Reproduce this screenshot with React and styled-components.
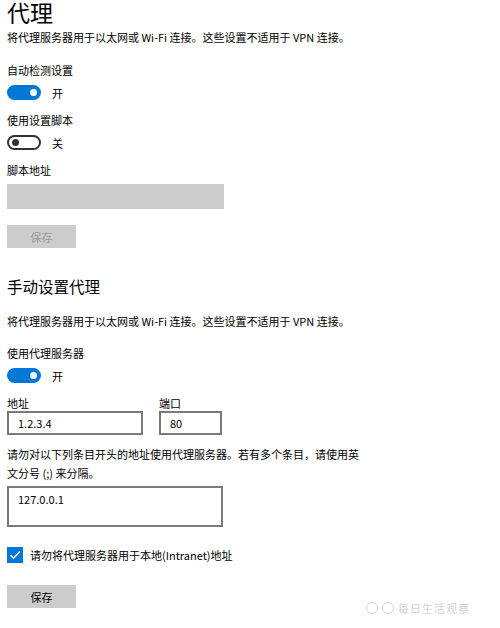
import styled, { createGlobalStyle } from "styled-components";

const Global = createGlobalStyle`
	html, body {
		margin: 0;
		padding: 0;
		background: #ffffff;
	}
	body {
		font-family: "Noto Sans CJK SC", "Noto Sans", sans-serif;
		color: #000000;
	}
`;

const Page = styled.div`
	position: relative;
	width: 500px;
	height: 628px;
	overflow: hidden;
	padding-left: 7px;
	box-sizing: border-box;
	display: flex;
	flex-direction: column;
	align-items: flex-start;
`;

const Title = styled.h1`
	margin: 0;
	font-size: 23px;
	font-weight: 400;
	line-height: 24px;
`;

const Heading = styled.h2`
	margin: ${(p) => p.$top}px 0 0;
	font-size: 15.5px;
	font-weight: 400;
	line-height: 22px;
`;

const Text = styled.div`
	margin-top: ${(p) => p.$top}px;
	font-size: 11px;
	line-height: ${(p) => p.$lh || 18}px;
	white-space: nowrap;
`;

const ToggleRow = styled.div`
	margin-top: ${(p) => p.$top}px;
	display: flex;
	align-items: center;
	gap: 11px;
	height: 15px;
	font-size: 11px;
`;

const Track = styled.div`
	width: 34px;
	height: 15px;
	box-sizing: border-box;
	border-radius: 8px;
	border: 2px solid ${(p) => (p.$on ? "#0078d7" : "#333333")};
	background: ${(p) => (p.$on ? "#0078d7" : "#ffffff")};
	display: flex;
	align-items: center;
	justify-content: ${(p) => (p.$on ? "flex-end" : "flex-start")};
	padding: 0 2.5px;
`;

const Knob = styled.div`
	width: 7px;
	height: 7px;
	border-radius: 50%;
	background: ${(p) => (p.$on ? "#ffffff" : "#333333")};
`;

const GrayField = styled.div`
	margin-top: 5px;
	width: 217px;
	height: 25px;
	background: #cccccc;
`;

const Button = styled.div`
	margin-top: ${(p) => p.$top}px;
	width: 69px;
	height: 23px;
	background: #cccccc;
	display: flex;
	align-items: center;
	justify-content: center;
	font-size: 11px;
	color: ${(p) => (p.$disabled ? "#9a9a9a" : "#000000")};
`;

const FieldRow = styled.div`
	margin-top: 13px;
	display: flex;
	gap: 16px;
`;

const Field = styled.div`
	display: flex;
	flex-direction: column;
`;

const FieldLabel = styled.div`
	font-size: 11px;
	line-height: 14px;
	margin-bottom: 1px;
`;

const Input = styled.div`
	width: ${(p) => p.$w}px;
	height: ${(p) => p.$h || 24}px;
	margin-top: ${(p) => p.$top || 0}px;
	box-sizing: border-box;
	border: 2px solid #7a7a7a;
	padding: ${(p) => (p.$multi ? "4px 9px" : "0 9px")};
	display: flex;
	align-items: ${(p) => (p.$multi ? "flex-start" : "center")};
	font-size: 11px;
	line-height: 14px;
`;

const CheckRow = styled.div`
	margin-top: 20px;
	display: flex;
	align-items: center;
	gap: 7px;
	font-size: 11px;
`;

const Box = styled.div`
	width: 16px;
	height: 16px;
	background: #0078d7;
	display: flex;
	align-items: center;
	justify-content: center;
`;

const Watermark = styled.div`
	position: absolute;
	right: 30px;
	bottom: 12px;
	display: flex;
	align-items: center;
	gap: 2px;
	font-size: 11px;
	color: #d4d4d4;
	letter-spacing: 1px;
`;

const Dot = styled.span`
	width: 10px;
	height: 10px;
	border-radius: 50%;
	border: 1px solid #d4d4d4;
	display: inline-block;
	margin-right: 2px;
`;

function Toggle({ on, label, top }) {
	return (
		<ToggleRow $top={top}>
			<Track $on={on}>
				<Knob $on={on} />
			</Track>
			<span>{label}</span>
		</ToggleRow>
	);
}

export default function App() {
	return (
		<>
			<Global />
			<Page>
				<Title>代理</Title>
				<Text $top={4}>将代理服务器用于以太网或 Wi-Fi 连接。这些设置不适用于 VPN 连接。</Text>
				<Text $top={15}>自动检测设置</Text>
				<Toggle on label="开" top={6} />
				<Text $top={11}>使用设置脚本</Text>
				<Toggle on={false} label="关" top={6} />
				<Text $top={11}>脚本地址</Text>
				<GrayField />
				<Button $top={16} $disabled>
					保存
				</Button>

				<Heading $top={27}>手动设置代理</Heading>
				<Text $top={15}>将代理服务器用于以太网或 Wi-Fi 连接。这些设置不适用于 VPN 连接。</Text>
				<Text $top={14}>使用代理服务器</Text>
				<Toggle on label="开" top={6} />
				<FieldRow>
					<Field>
						<FieldLabel>地址</FieldLabel>
						<Input $w={136}>1.2.3.4</Input>
					</Field>
					<Field>
						<FieldLabel>端口</FieldLabel>
						<Input $w={63}>80</Input>
					</Field>
				</FieldRow>
				<Text $top={10} $lh={19}>
					请勿对以下列条目开头的地址使用代理服务器。若有多个条目，请使用英
					<br />
					文分号 (;) 来分隔。
				</Text>
				<Input $w={216} $h={41} $multi $top={3}>
					127.0.0.1
				</Input>
				<CheckRow>
					<Box>
						<svg width="12" height="12" viewBox="0 0 12 12">
							<path d="M1.5 6.2 L4.5 9.2 L10.8 2.6" fill="none" stroke="#ffffff" strokeWidth="1.4" />
						</svg>
					</Box>
					<span>请勿将代理服务器用于本地(Intranet)地址</span>
				</CheckRow>
				<Button $top={22}>保存</Button>

				<Watermark>
					<Dot />
					<Dot />
					每日生活观察
				</Watermark>
			</Page>
		</>
	);
}
